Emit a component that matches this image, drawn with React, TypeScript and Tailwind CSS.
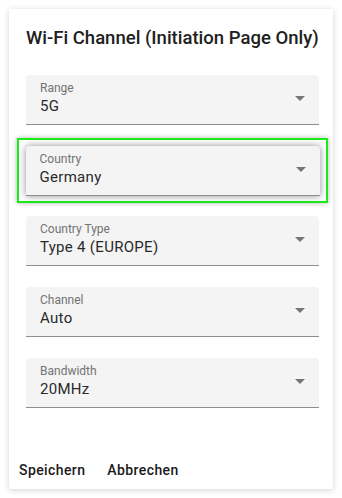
import React from 'react'

const fields = [
  { label: 'Range', value: '5G' },
  { label: 'Country', value: 'Germany', highlighted: true },
  { label: 'Country Type', value: 'Type 4 (EUROPE)' },
  { label: 'Channel', value: 'Auto' },
  { label: 'Bandwidth', value: '20MHz' },
]

function SelectField({ label, value, raised }: { label: string; value: string; raised?: boolean }) {
  return (
    <div
      className={`h-[50px] bg-[#f4f4f4] rounded-t border-b border-[#8f8f8f] flex items-center pl-[14px] pr-[14px] ${
        raised ? 'shadow-[0_0_7px_rgba(0,0,0,0.45)]' : ''
      }`}
    >
      <div className="flex-1 pt-[5px] self-start">
        <div className="text-[12px] leading-4 text-[#737373]">{label}</div>
        <div className="text-[15px] leading-[21px] text-[#2a2a2a] tracking-[0.3px]">{value}</div>
      </div>
      <svg width="10" height="5" viewBox="0 0 10 5" className="mt-[-2px]">
        <path d="M0 0 L10 0 L5 5 Z" fill="#757575" />
      </svg>
    </div>
  )
}

export default function App() {
  return (
    <div className="w-[342px] h-[498px] bg-white pt-[9px] pl-[9px] font-['Roboto',sans-serif]">
      <div className="w-[324px] h-[480px] bg-white shadow-[0_1px_6px_rgba(0,0,0,0.18)] flex flex-col">
        <div className="pl-[17px] pr-[14px] pt-[15px]">
          <h2 className="text-[18.5px] leading-7 font-medium text-[#212121]">
            Wi-Fi Channel (Initiation Page Only)
          </h2>
          <div className="mt-[23px] flex flex-col gap-[21px]">
            {fields.map((f) =>
              f.highlighted ? (
                <div
                  key={f.label}
                  className="-mx-[9px] -my-[8px] border-[2.5px] border-[#1aeb1a] px-[6.5px] py-[5.5px] shadow-[0_0_5px_rgba(0,0,0,0.3)]"
                >
                  <SelectField label={f.label} value={f.value} raised />
                </div>
              ) : (
                <SelectField key={f.label} label={f.label} value={f.value} />
              )
            )}
          </div>
        </div>
        <div className="mt-auto mb-px h-9 flex items-center px-[2px] gap-[6px]">
          <button className="px-2 h-9 text-[14px] font-medium tracking-[0.4px] text-[#1a1a1a]">Speichern</button>
          <button className="px-2 h-9 text-[14px] font-medium tracking-[0.4px] text-[#1a1a1a]">Abbrechen</button>
        </div>
      </div>
    </div>
  )
}
